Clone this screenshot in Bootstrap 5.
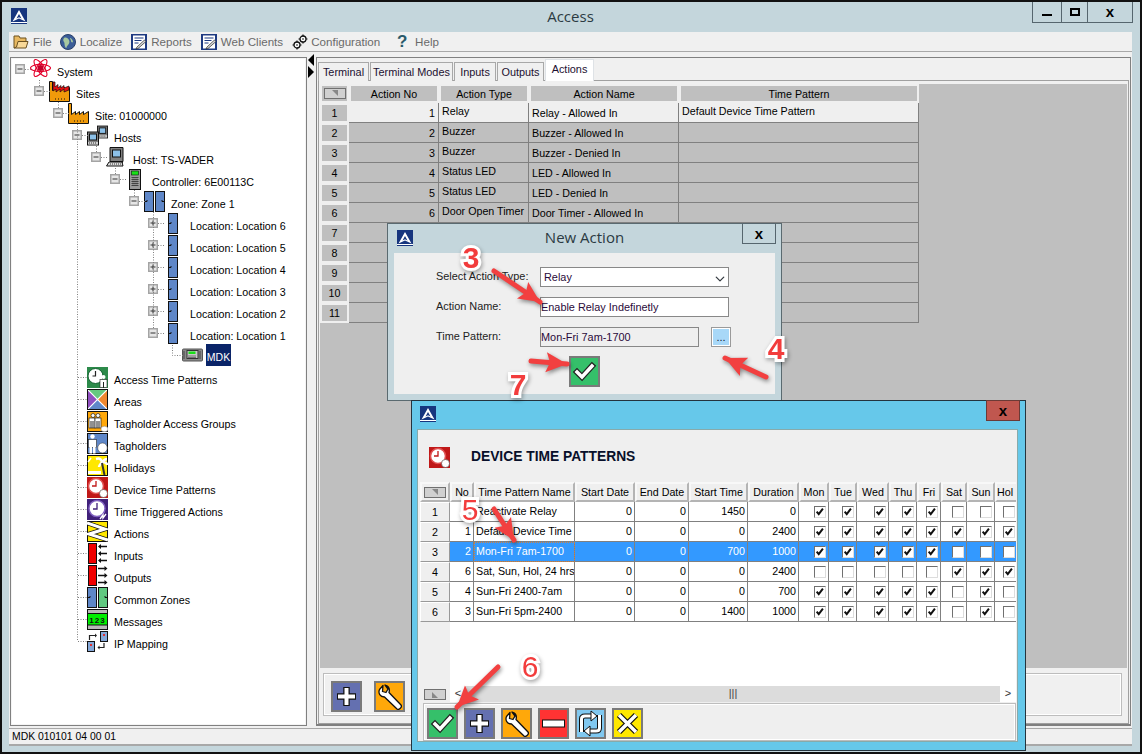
<!DOCTYPE html>
<html lang="en">
<head>
<meta charset="utf-8">
<title>Access</title>
<link rel="stylesheet" href="https://cdn.jsdelivr.net/npm/bootstrap@5.3.0/dist/css/bootstrap.min.css">
<style>
html,body{margin:0;padding:0;background:#000;overflow:hidden}
body{font-family:"Liberation Sans",sans-serif;font-size:10.7px;line-height:1.2;color:#000}
.stage{position:relative;width:1142px;height:754px;background:#111;overflow:hidden}
.win{margin:2px 2px 0;height:750px;background:#c4d6dc;padding:0 8px 0 7px}
.titlebar{height:30px;position:relative}
.title{font-family:"Open Sans",sans-serif;font-size:15px;color:#2b3a42;padding-top:5px}
.logo{width:16px;height:16px;flex:none}
.titlebar .logo{position:absolute;left:2px;top:6px}
.wbtns{position:absolute;right:-1px;top:0;height:21px;border:1px solid #56666e;border-top:0}
.wbtns span{display:flex;align-items:center;justify-content:center;height:20px;font-weight:700;font-size:15px;border-left:1px solid #56666e}
.wbtns span:first-child{border-left:0;width:28px}
.wbtns .mx{width:26px}.wbtns .cl{width:45px}
.bar{display:block;width:10px;height:2px;background:#000;margin-top:6px}
.sq{display:block;width:10px;height:8px;border:2px solid #000}
.menu{height:20px;background:#f0f0f0;border-bottom:1px solid #a8a8a8;padding-left:4px;color:#6a6a6a;font-size:11.6px}
.menu .it{display:flex;align-items:center;gap:4px;margin-right:9px}
.menu .it:first-child{margin-right:8px}
.menu .it.cfg{margin-right:15px;gap:3px}
.menu svg{width:16px;height:16px;flex:none}
.help{font-size:17px;font-weight:700;color:#2a5a6a;line-height:1;width:14px;text-align:center;margin-right:2px}
.main{height:676px;background:#f0f0f0}
.tree{width:297px;margin:5px 0 2px 1px;border:1px solid #808080;background:#fff;box-shadow:inset 0 0 0 1px #f4f4f4}
.trow{height:22px;display:flex;align-items:center;white-space:nowrap}
.trow>span{padding-top:6px}
.tb{width:10px;height:10px;flex:none;margin-right:5px}
.ti{width:21px;height:21px;flex:none;margin-right:6px}
.l0{padding-left:4px}.l1{padding-left:23px}.l2{padding-left:42px}.l3{padding-left:61px}.l4{padding-left:80px}.l5{padding-left:99px}.l6{padding-left:118px}.l7{padding-left:137px}.l8{padding-left:156px}
.trow>.sel{background:#0a2468;color:#fff;margin-left:-3px;height:22px;padding:7px 0 0;width:25px;font-size:10.5px;text-align:center}
.split{width:9px;padding-top:2px}
.tri{width:0;height:0;border-top:6px solid transparent;border-bottom:6px solid transparent;margin-left:1px}
.tri.a{border-right:6px solid #000}.tri.b{border-left:6px solid #000}
.right{width:815px;margin-top:5px;margin-bottom:2px;border:1px solid #808080;border-bottom-width:2px;padding:1px 1px 0 0}
.nav-tabs.tabs{--bs-nav-tabs-border-width:0;height:21px;flex-wrap:nowrap;border:0;margin-left:1px;position:relative;z-index:1}
.tabs .nav-link{display:block;height:19px;margin:3px 1px 0 0;padding:2px 0 0;border:1px solid #a8a8a8;border-bottom:0;border-radius:0;background:#f0f0f0;color:#1c1030;font-size:10.9px;line-height:15px;white-space:nowrap;text-align:center}
.tabs .nav-link.active{height:22px;margin-top:0;background:#fff;color:#1c1030;padding-top:2px;position:relative}
.t1{width:51px}.t2{width:83px}.t3{width:42px}.t4{width:47px}.t5{width:49px}
.tabbody{height:644px;margin-left:1px;border:1px solid #a0a0a0;background:#f0f0f0;padding:3px 1px 0 1px;width:811px}
.gridwrap{height:584px;background:#bfbfbf}
.grid.table{table-layout:fixed;border-collapse:separate;border-spacing:0;margin:0;--bs-table-bg:transparent;font-size:10.7px;color:#000}
.grid.table>:not(caption)>*>*{padding:0 3px;height:20px;border:0;border-right:1px solid #808080;border-bottom:1px solid #808080;box-shadow:none;vertical-align:middle;overflow:hidden;white-space:nowrap;color:inherit;line-height:15px}
.g1.table{width:599px}
.g1.table>tbody>tr>td{background:#bfbfbf;padding-top:1px}
.g1.table>tbody>tr.cur>td{background:#efefef}
.g1.table>tbody>tr>td.ty{vertical-align:top;padding-top:1px}
.g1.table>thead>tr>th,.g1.table>tbody>tr>th{background:#bfbfbf;border:2px solid #efefef;font-weight:400;text-align:center;padding:0;line-height:14px}
.g1.table>thead>tr>th{height:19px}
.corner{display:block;width:22px;height:11px;margin:auto;border:1px solid #707070;position:relative;background:#d0d0d0}
.corner::after{content:"";position:absolute;left:7px;top:1px;border-top:6px solid #888;border-left:6px solid transparent}
.corner.up::after{border-top:0;border-bottom:6px solid #888;border-left:0;border-right:6px solid transparent;top:2px}
.toolbar1{height:43px;margin:5px 5px 0 3px;border:1px solid #bdbdbd;box-shadow:inset 0 0 0 1px #fff;padding:7px 0 0 7px;gap:12px}
.tbtn{display:flex;width:31px;height:31px;padding:0;border:2px solid #7a7a7a;border-radius:0;flex:none}
.tbtn svg{width:27px;height:27px}
.green{background:#35c06a}.blue{background:#6470b0}.orange{background:#ffa80a}.red{background:#ff3333}.sky{background:#80c8f0}.yellow{background:#ffe800}
.status{background:#f0f0f0;border-top:1px solid #a8a8a8;border-bottom:2px solid #a8a8a8;padding:2px 0 0 3px;font-size:10.4px;box-sizing:content-box;height:13px}
.dlg{position:absolute;left:387px;top:223px;width:395px;height:178px;background:#c4d6dc;border:1px solid #5a6a70}
.dlg .hdr{height:29px;position:relative}
.dlg .hdr .logo{position:absolute;left:9px;top:6px}
.dlg .ttl{font-family:"Open Sans",sans-serif;font-size:15px;color:#2b3a42;text-align:center;padding-top:4px}
.x{position:absolute;top:-1px;right:5px;width:34px;height:21px;border:1px solid #56666e;font-weight:700;font-size:15px;display:flex;align-items:center;justify-content:center;line-height:1}
.dlg .body{margin:0 6px;height:141px;background:#efefef;padding:14px 0 0 42px}
.frow{display:flex;align-items:center;height:20px;margin-bottom:10px;color:#222}
.frow label{width:104px;flex:none;font-size:10.9px}
.frow .form-control,.frow .form-select{height:20px;min-height:0;width:189px;border-radius:0;border:1px solid #888;font-size:10.9px;padding:0;color:#2a0a3a;box-shadow:none;line-height:18px;font-family:inherit}
.frow .form-select{background-size:12px 10px;background-position:right 2px top 6px;padding-left:3px}
.frow .form-control.dis{width:159px;background:#efefef}
.more{width:20px;height:20px;margin-left:12px;padding:0;border:1px solid #9a9a9a;border-radius:0;background:#a8d8f8;font-size:11px;line-height:14px;color:#123;box-shadow:inset 0 0 0 1px #fff}
.okrow{padding-left:133px;margin-top:-1px}
.tp{position:absolute;left:411px;top:400px;width:615px;height:351px;background:#66c8ea;border:1px solid #24343e}
.tp .logo{position:absolute;left:8px;top:5px}
.tp .x{top:-1px;right:5px;width:34px;background:#c0574f;border-color:#6b3a36}
.tp .inner{position:absolute;left:6px;top:29px;width:599px;height:311px;background:#efefef;box-shadow:0 0 0 1px #8aa}
.tp .head{height:52px;gap:21px;padding-left:11px;font-weight:700;font-size:13.8px;color:#08102a;padding-top:3px}
.tp .head svg{width:21px;height:21px;flex:none}
.g2wrap{margin-left:2px;width:596px;height:220px;overflow:hidden;background:#fff;position:relative}
.g2.table{width:605px}
.g2.table>thead>tr>th{background:#efefef;border:2px solid #fff;border-color:#f8f8f8 #b4b4b4 #b4b4b4 #f8f8f8;font-weight:400;text-align:center;padding:0;height:20px}
.g2.table>tbody>tr>th{background:#efefef;font-weight:400;text-align:center;padding:0;border-top:1px solid #fff;border-left:1px solid #fff;border-right:1px solid #999;border-bottom:1px solid #999}
.g2.table>tbody>tr>td{background:#fff;padding:0 2px 0 2px}
.g2.table>tbody>tr.on>td{background:#3399ff;color:#fff}
.g2.table>tbody>tr>td.fc{outline:1px dotted #d08040;outline-offset:-1px}
.rowblank{position:absolute;left:0;top:140px;bottom:16px;width:30px;background:#efefef}
.sb{position:absolute;left:0;right:0;bottom:0;height:16px;background:#dcdcdc;display:flex}
.sb .c{width:30px;background:#efefef;display:flex;align-items:center}
.sb .ar{width:16px;background:#fff;font-size:11px;text-align:center;line-height:15px;color:#333}
.sb .gr{flex:1;text-align:center;font-size:11px;line-height:15px;color:#444}
.tb2{height:38px;margin:1px 1px 0 5px;background:#efefef;border:1px solid #bdbdbd;box-shadow:inset 0 0 0 1px #fff;padding:4px 0 0 3px;gap:6px}
.anno{position:absolute;left:0;top:0;width:1142px;height:754px;pointer-events:none}
.arrows{filter:drop-shadow(1px 2px 2px rgba(0,0,0,.45))}
.num{position:absolute;font:700 30px/1 "Liberation Sans",sans-serif;color:#f23c3c;-webkit-text-stroke:6px #fff;paint-order:stroke fill;filter:drop-shadow(1px 2px 2px rgba(0,0,0,.35));transform:translate(-50%,-50%)}
.n3{left:471px;top:258px}.n4{left:776px;top:349px}.n7{left:518px;top:385px}.n5{left:470px;top:510px;font-weight:400}.n6{left:530px;top:667px;font-weight:400}
.form-check-input.cb{width:12px;height:12px;margin:0;border-radius:0;border:1px solid #707070;border-right-color:#ddd;border-bottom-color:#ddd;background-color:#fff;box-shadow:none;vertical-align:middle;display:inline-block;float:none;opacity:1}
.form-check-input.cb:checked{--bs-form-check-bg-image:url("data:image/svg+xml,%3csvg xmlns='http://www.w3.org/2000/svg' viewBox='0 0 12 12'%3e%3cpath d='M2 5.500l2.500 3L9.500 2' fill='none' stroke='%23111' stroke-width='2.400'/%3e%3c/svg%3e");background-size:100%;background-color:#fff;border-color:#707070 #ddd #ddd #707070}
</style>
</head>
<body>
<svg width="0" height="0" class="position-absolute">
<defs>
<symbol id="logo" viewBox="0 0 16 16"><rect width="16" height="16" fill="#16357e"/><path d="M8 2L14.500 13.500L8 10.500L1.500 13.500Z" fill="#fff"/><path d="M8 6L10.500 10.500L8 9.300L5.500 10.500Z" fill="#16357e"/><rect y="14" width="16" height="1" fill="#fff"/></symbol>
<symbol id="minus" viewBox="0 0 10 10"><rect x=".75" y=".75" width="8.500" height="8.500" fill="#e6e6e6" stroke="#a4a4a4" stroke-width="1.500"/><rect x="2.500" y="4.500" width="5" height="1" fill="#333"/></symbol>
<symbol id="plus" viewBox="0 0 10 10"><rect x=".75" y=".75" width="8.500" height="8.500" fill="#e6e6e6" stroke="#a4a4a4" stroke-width="1.500"/><rect x="2.500" y="4.500" width="5" height="1" fill="#333"/><rect x="4.500" y="2.500" width="1" height="5" fill="#333"/></symbol>
<symbol id="sys" viewBox="0 0 21 21"><g fill="none" stroke="#e4002b" stroke-width="1.100"><ellipse cx="10.500" cy="9" rx="10" ry="3.600"/><ellipse cx="10.500" cy="9" rx="10" ry="3.600" transform="rotate(55 10.500 9)"/><ellipse cx="10.500" cy="9" rx="10" ry="3.600" transform="rotate(-55 10.500 9)"/></g><circle cx="10.500" cy="9" r="3" fill="#c4002b"/></symbol>
<symbol id="sites" viewBox="0 0 21 21"><path d="M.5 20.500V.5h3v9l4-3v3l4-3v3l4-3v3l5-3v14z" fill="#f09a0a" stroke="#111"/><path d="M4 1h2v5l3-2.500V7l3-2.500V7l3-2.500V7l5-2v4l-5 2V8l-4 3V8l-4 3V8L4 10z" fill="#e81010" stroke="#111" stroke-width=".7"/><path d="M6 18h1m2 0h1m2 0h1m2 0h1" stroke="#111"/></symbol>
<symbol id="site" viewBox="0 0 21 21"><path d="M.5 20.500V.5h3v11l4-3v3l4-3v3l4-3v3l5-3v12z" fill="#f09a0a" stroke="#111"/><path d="M6 18h1m2 0h1m2 0h1m2 0h1" stroke="#111"/></symbol>
<symbol id="pc" viewBox="0 0 12 14"><rect x=".5" y=".5" width="11" height="13" fill="#808080" stroke="#111"/><rect x="2.500" y="2.500" width="7" height="6" fill="#8cc0e8" stroke="#111"/><rect x="1" y="10.500" width="10" height="2.500" fill="#d0d0d0"/><path d="M2 11.500h8" stroke="#333" stroke-dasharray="1 1"/></symbol>
<symbol id="hosts" viewBox="0 0 21 21"><use href="#pc" x="10" y="0" width="11" height="14"/><use href="#pc" x="0" y="6" width="12" height="15"/></symbol>
<symbol id="host" viewBox="0 0 21 21"><path d="M4 .5h13v14H4z" fill="#808080" stroke="#111"/><rect x="6.500" y="3" width="8" height="7" fill="#8cc0e8" stroke="#111"/><path d="M3 15h14l-1 0 1 4H.5z" fill="#ddd" stroke="#111"/><path d="M4 17h11" stroke="#333" stroke-dasharray="1 1"/></symbol>
<symbol id="ctrl" viewBox="0 0 21 21"><rect x="4.500" y=".5" width="11" height="20" fill="#9a9a9a" stroke="#111"/><rect x="6.500" y="2" width="7" height="4" fill="#18e018" stroke="#111" stroke-width=".6"/><rect x="6.500" y="8" width="7" height="9" fill="#444"/><path d="M6.500 9.500h7m-7 2h7m-7 2h7m-7 2h7" stroke="#ddd" stroke-dasharray="1 1"/></symbol>
<symbol id="zone" viewBox="0 0 21 21"><rect x=".5" y=".5" width="9" height="20" fill="#5f87c8" stroke="#111"/><rect x="11.500" y=".5" width="9" height="20" fill="#5f87c8" stroke="#111"/><path d="M.5 10.500H3V9m17.500 1.500H18V9" fill="none" stroke="#111"/></symbol>
<symbol id="door" viewBox="0 0 21 21"><rect x="5.500" y=".5" width="9" height="20" fill="#5f87c8" stroke="#111" /><path d="M5.500 10.500H8V9" fill="none" stroke="#111"/></symbol>
<symbol id="mdk" viewBox="0 0 21 21"><rect x=".5" y="4" width="20" height="12" rx="1" fill="#8a8a8a" stroke="#555"/><rect x="5" y="5.500" width="11" height="8" fill="#c8c8c8" stroke="#333"/><rect x="6.500" y="6.500" width="7" height="2.500" fill="#18e018"/><path d="M6.500 11h8M6.500 12.500h8" stroke="#222" stroke-dasharray="1 1"/><path d="M2 6v8M18 6v8" stroke="#444"/></symbol>
<symbol id="atp" viewBox="0 0 21 21"><rect width="21" height="21" fill="#2c8a4a"/><circle cx="8.500" cy="9" r="7.500" fill="#fff" stroke="#136030"/><path d="M8.500 4v5h-3" fill="none" stroke="#222" stroke-width="1.200"/><circle cx="16.500" cy="10" r="2" fill="#fff"/><rect x="13" y="12.500" width="7" height="8" fill="#fff" stroke="#222" stroke-width=".6"/><path d="M16.500 15v6" stroke="#222"/></symbol>
<symbol id="areas" viewBox="0 0 21 21"><path d="M0 0H21L10.500 10.500Z" fill="#66c880"/><path d="M0 0V21L10.500 10.500Z" fill="#9050c0"/><path d="M21 0V21L10.500 10.500Z" fill="#f08830"/><path d="M0 21H21L10.500 10.500Z" fill="#5f87c8"/><path d="M0 0L21 21M21 0L0 21" stroke="#fff" stroke-width="1.200"/><rect x=".5" y=".5" width="20" height="20" fill="none" stroke="#111"/></symbol>
<symbol id="groups" viewBox="0 0 21 21"><rect x=".5" y=".5" width="20" height="20" fill="#ffa80a" stroke="#111"/><g fill="#fff" stroke="#222" stroke-width=".7"><circle cx="6" cy="4.500" r="2"/><circle cx="11" cy="4.500" r="2"/><rect x="2" y="7" width="6" height="10"/><rect x="8" y="7" width="6" height="10"/></g><path d="M4 10v7m2-7v7m4-7v7m2-7v7" stroke="#222"/><ellipse cx="17.500" cy="18" rx="3.500" ry="2.800" fill="#fff" stroke="#888" stroke-width=".5"/></symbol>
<symbol id="holders" viewBox="0 0 21 21"><rect x=".5" y=".5" width="20" height="20" fill="#5f87c8" stroke="#111"/><circle cx="5.500" cy="3.500" r="2.200" fill="#fff"/><rect x="1.500" y="6.500" width="8" height="8" fill="#fff" stroke="#222" stroke-width=".6"/><rect x="2.500" y="14" width="2.500" height="6.500" fill="#fff"/><rect x="6" y="14" width="2.500" height="6.500" fill="#fff"/><ellipse cx="15.500" cy="15" rx="4.800" ry="5" fill="#fff" stroke="#333" stroke-width=".5"/></symbol>
<symbol id="hol" viewBox="0 0 21 21"><rect x=".5" y=".5" width="20" height="20" fill="#ffe800" stroke="#111"/><path d="M9 4c3-1 5 0 6 3m0 0c2-2 4-3 5-3m-5 3c3 0 5 1 5 3m-5-3c-1 2-3 3-3 5" fill="none" stroke="#fff" stroke-width="2.500"/><path d="M15 8l2.500 12" stroke="#333" stroke-width="2"/><path d="M1 17.500h13" stroke="#fff" stroke-width="3"/><path d="M4 3L1 7" stroke="#fff" stroke-width="1.500"/></symbol>
<symbol id="dtp" viewBox="0 0 21 21"><rect width="21" height="21" fill="#c01818"/><circle cx="9" cy="9" r="7.500" fill="#fff" stroke="#e05050" stroke-width="1.500"/><path d="M9 4v5H5" fill="none" stroke="#c01818" stroke-width="1.300"/><ellipse cx="16.500" cy="16.500" rx="4" ry="4" fill="#fff" stroke="#333" stroke-width=".5"/></symbol>
<symbol id="tta" viewBox="0 0 21 21"><rect width="21" height="21" fill="#40207a"/><circle cx="10" cy="9.500" r="8" fill="#fff" stroke="#8060c0" stroke-width="1.500"/><path d="M10 4v6H6" fill="none" stroke="#40207a" stroke-width="1.300"/><path d="M13 20l3-4v3l3-4" fill="none" stroke="#fff" stroke-width="1.300"/></symbol>
<symbol id="acts" viewBox="0 0 21 21"><rect x=".5" y=".5" width="20" height="20" fill="#ffe800" stroke="#111"/><path d="M0 2L18 8L2 13L21 19" fill="none" stroke="#111" stroke-width="4.500"/><path d="M0 2L18 8L2 13L21 19" fill="none" stroke="#fff" stroke-width="3"/></symbol>
<symbol id="inp" viewBox="0 0 21 21"><rect x="1.500" y=".5" width="8" height="20" fill="#f00000" stroke="#111"/><g fill="none" stroke="#111" stroke-width="1.500"><path d="M12 3.500h8M12 10.500h8M12 17.500h8"/></g><path d="M11 3.500l3-2.500v5zM11 10.500l3-2.500v5zM11 17.500l3-2.500v5z" fill="#111"/></symbol>
<symbol id="out" viewBox="0 0 21 21"><rect x="1.500" y=".5" width="8" height="20" fill="#f00000" stroke="#111"/><g fill="none" stroke="#111" stroke-width="1.500"><path d="M11 3.500h8M11 10.500h8M11 17.500h8"/></g><path d="M20.500 3.500l-3-2.500v5zM20.500 10.500l-3-2.500v5zM20.500 17.500l-3-2.500v5z" fill="#111"/></symbol>
<symbol id="cz" viewBox="0 0 21 21"><rect x=".5" y=".5" width="9" height="20" fill="#5f87c8" stroke="#111"/><rect x="11.500" y=".5" width="9" height="20" fill="#60c880" stroke="#111"/><path d="M.5 10.500H3V9m17.500 1.500H18V9" fill="none" stroke="#111"/></symbol>
<symbol id="msg" viewBox="0 0 21 21"><rect x=".5" y=".5" width="20" height="20" fill="#b8b8b8" stroke="#111"/><rect x="1" y="5" width="19" height="11" fill="#00f000"/><path d="M0 4.500h21M0 16h21" stroke="#111"/><text x="10.500" y="13.500" text-anchor="middle" font-family="Liberation Sans,sans-serif" font-weight="700" font-size="8" letter-spacing="1" fill="#111">123</text></symbol>
<symbol id="ipm" viewBox="0 0 21 21"><rect x=".5" y="10.500" width="7" height="10" fill="#86a8d8" stroke="#111"/><rect x="13.500" y=".5" width="7" height="10" fill="#86a8d8" stroke="#111"/><rect x="3" y="13" width="2" height="2" fill="#e03030"/><rect x="16" y="3" width="2" height="2" fill="#e03030"/><path d="M2.500 9V4.500H8.500M17 12V16.500H12" fill="none" stroke="#222" stroke-width="1.200"/><path d="M10 4.500l-2-2v4zM10.500 16.500l2-2v4z" fill="#222"/></symbol>
<symbol id="folder" viewBox="0 0 16 16"><path d="M1 14V2h5l1 2h6v3" fill="#e8b860" stroke="#6a5020"/><path d="M3.500 13L5 7.500H15L13 14H1Z" fill="#f8d898" stroke="#6a5020"/></symbol>
<symbol id="globe" viewBox="0 0 16 16"><circle cx="8" cy="8" r="7.500" fill="#3a5c98" stroke="#28406a"/><path d="M4 4c2-1 4 0 5 2s0 4-1 5c-2 2-1 3-2 3-2-2-1-5-2-6S3 5 4 4zM10 4c1 0 3 2 3 4-1 1-2 0-2-1s-1-2-1-3z" fill="#a8c8a0"/></symbol>
<symbol id="report" viewBox="0 0 16 16"><rect width="16" height="16" fill="#1e3a82"/><rect x="2" y="1.500" width="12" height="13" fill="#fff"/><path d="M3.500 4h9M3.500 6.500h7M3.500 9h4" stroke="#1e3a82"/><path d="M6 13L5 15l2-.5 8-7-1.500-1.500z" fill="#d8d8d8" stroke="#222" stroke-width=".7"/></symbol>
<symbol id="gears" viewBox="0 0 16 16"><g fill="#fff" stroke="#111" stroke-width="1.300"><circle cx="11" cy="5" r="3"/><circle cx="5" cy="11" r="3"/></g><g stroke="#111" stroke-width="1.200"><path d="M11 .5v1.500M11 8v1.500M6.500 5H8M14 5h1.500M5 6.500V8M5 14v1.500M.5 11H2M8 11h1.500"/></g><circle cx="11" cy="5" r=".8"/><circle cx="5" cy="11" r=".8"/></symbol>
<symbol id="ok" viewBox="0 0 27 27"><path d="M6 14l5 5L21 8" fill="none" stroke="#222" stroke-width="6" stroke-linecap="square"/><path d="M6 14l5 5L21 8" fill="none" stroke="#fff" stroke-width="3.500" stroke-linecap="square"/></symbol>
<symbol id="add" viewBox="0 0 27 27"><path d="M13.500 4v19M4 13.500h19" stroke="#111" stroke-width="6.500"/><path d="M13.500 5v17M5 13.500h17" stroke="#fff" stroke-width="4"/></symbol>
<symbol id="wrench" viewBox="0 0 27 27"><path d="M7 2.500L3.500 6.500C2 10 4 14 8.500 14L21 26C23 27.500 26.500 24 25 22L13 9.500C14 6 12.500 3 9 2L12 6 10 9.500 6.500 8.500Z" fill="#fff" stroke="#111" stroke-width="1.300" stroke-linejoin="round"/></symbol>
<symbol id="rem" viewBox="0 0 27 27"><rect x="2.500" y="10" width="22" height="7" fill="#fff" stroke="#111"/></symbol>
<symbol id="sync" viewBox="0 0 27 27"><g fill="none" stroke="#111" stroke-width="5" stroke-linejoin="round"><path d="M4.500 22V9Q4.500 6 8 6H14"/><path d="M22.500 5V18Q22.500 21 19 21H13"/></g><g fill="none" stroke="#fff" stroke-width="3" stroke-linejoin="round"><path d="M4.500 22V9Q4.500 6 8 6H14"/><path d="M22.500 5V18Q22.500 21 19 21H13"/></g><path d="M14 1l6 5-6 5zM13 16l-6 5 6 5z" fill="#fff" stroke="#111"/></symbol>
<symbol id="del" viewBox="0 0 27 27"><path d="M5 5l17 17M22 5L5 22" stroke="#111" stroke-width="6"/><path d="M5 5l17 17M22 5L5 22" stroke="#fff" stroke-width="3.500"/></symbol>
</defs>
</svg>

<div class="stage">
  <div class="win">
    <div class="titlebar">
      <svg class="logo"><use href="#logo"/></svg>
      <div class="title text-center">Access</div>
      <div class="wbtns d-flex"><span><i class="bar"></i></span><span class="mx"><i class="sq"></i></span><span class="cl">x</span></div>
    </div>
    <nav class="menu d-flex align-items-center">
      <div class="it"><svg><use href="#folder"/></svg>File</div>
      <div class="it"><svg><use href="#globe"/></svg>Localize</div>
      <div class="it"><svg><use href="#report"/></svg>Reports</div>
      <div class="it"><svg><use href="#report"/></svg>Web Clients</div>
      <div class="it cfg"><svg><use href="#gears"/></svg>Configuration</div>
      <div class="it"><span class="help">?</span>Help</div>
    </nav>
    <div class="main d-flex">
      <div class="tree">
        <div class="trow l0"><svg class="tb"><use href="#minus"/></svg><svg class="ti"><use href="#sys"/></svg><span>System</span></div>
        <div class="trow l1"><svg class="tb"><use href="#minus"/></svg><svg class="ti"><use href="#sites"/></svg><span>Sites</span></div>
        <div class="trow l2"><svg class="tb"><use href="#minus"/></svg><svg class="ti"><use href="#site"/></svg><span>Site: 01000000</span></div>
        <div class="trow l3"><svg class="tb"><use href="#minus"/></svg><svg class="ti"><use href="#hosts"/></svg><span>Hosts</span></div>
        <div class="trow l4"><svg class="tb"><use href="#minus"/></svg><svg class="ti"><use href="#host"/></svg><span>Host: TS-VADER</span></div>
        <div class="trow l5"><svg class="tb"><use href="#minus"/></svg><svg class="ti"><use href="#ctrl"/></svg><span>Controller: 6E00113C</span></div>
        <div class="trow l6"><svg class="tb"><use href="#minus"/></svg><svg class="ti"><use href="#zone"/></svg><span>Zone: Zone 1</span></div>
        <div class="trow l7"><svg class="tb"><use href="#plus"/></svg><svg class="ti"><use href="#door"/></svg><span>Location: Location 6</span></div>
        <div class="trow l7"><svg class="tb"><use href="#plus"/></svg><svg class="ti"><use href="#door"/></svg><span>Location: Location 5</span></div>
        <div class="trow l7"><svg class="tb"><use href="#plus"/></svg><svg class="ti"><use href="#door"/></svg><span>Location: Location 4</span></div>
        <div class="trow l7"><svg class="tb"><use href="#plus"/></svg><svg class="ti"><use href="#door"/></svg><span>Location: Location 3</span></div>
        <div class="trow l7"><svg class="tb"><use href="#plus"/></svg><svg class="ti"><use href="#door"/></svg><span>Location: Location 2</span></div>
        <div class="trow l7"><svg class="tb"><use href="#minus"/></svg><svg class="ti"><use href="#door"/></svg><span>Location: Location 1</span></div>
        <div class="trow l8"><svg class="tb invisible"></svg><svg class="ti"><use href="#mdk"/></svg><span class="sel">MDK</span></div>
        <div class="trow l3"><svg class="tb invisible"></svg><svg class="ti"><use href="#atp"/></svg><span>Access Time Patterns</span></div>
        <div class="trow l3"><svg class="tb invisible"></svg><svg class="ti"><use href="#areas"/></svg><span>Areas</span></div>
        <div class="trow l3"><svg class="tb invisible"></svg><svg class="ti"><use href="#groups"/></svg><span>Tagholder Access Groups</span></div>
        <div class="trow l3"><svg class="tb invisible"></svg><svg class="ti"><use href="#holders"/></svg><span>Tagholders</span></div>
        <div class="trow l3"><svg class="tb invisible"></svg><svg class="ti"><use href="#hol"/></svg><span>Holidays</span></div>
        <div class="trow l3"><svg class="tb invisible"></svg><svg class="ti"><use href="#dtp"/></svg><span>Device Time Patterns</span></div>
        <div class="trow l3"><svg class="tb invisible"></svg><svg class="ti"><use href="#tta"/></svg><span>Time Triggered Actions</span></div>
        <div class="trow l3"><svg class="tb invisible"></svg><svg class="ti"><use href="#acts"/></svg><span>Actions</span></div>
        <div class="trow l3"><svg class="tb invisible"></svg><svg class="ti"><use href="#inp"/></svg><span>Inputs</span></div>
        <div class="trow l3"><svg class="tb invisible"></svg><svg class="ti"><use href="#out"/></svg><span>Outputs</span></div>
        <div class="trow l3"><svg class="tb invisible"></svg><svg class="ti"><use href="#cz"/></svg><span>Common Zones</span></div>
        <div class="trow l3"><svg class="tb invisible"></svg><svg class="ti"><use href="#msg"/></svg><span>Messages</span></div>
        <div class="trow l3"><svg class="tb invisible"></svg><svg class="ti"><use href="#ipm"/></svg><span>IP Mapping</span></div>
      </div>
      <div class="split"><div class="tri a"></div><div class="tri b"></div></div>
      <div class="right">
        <ul class="nav nav-tabs tabs">
          <li class="nav-item"><a class="nav-link t1" href="#">Terminal</a></li>
          <li class="nav-item"><a class="nav-link t2" href="#">Terminal Modes</a></li>
          <li class="nav-item"><a class="nav-link t3" href="#">Inputs</a></li>
          <li class="nav-item"><a class="nav-link t4" href="#">Outputs</a></li>
          <li class="nav-item"><a class="nav-link t5 active" href="#">Actions</a></li>
        </ul>
        <div class="tabbody">
          <div class="gridwrap">
            <table class="table grid g1">
              <colgroup><col style="width:29px"><col style="width:90px"><col style="width:90px"><col style="width:150px"><col style="width:240px"></colgroup>
              <thead><tr><th><span class="corner"></span></th><th>Action No</th><th>Action Type</th><th>Action Name</th><th>Time Pattern</th></tr></thead>
              <tbody>
                <tr class="cur"><th>1</th><td class="text-end">1</td><td class="ty">Relay</td><td>Relay - Allowed In</td><td class="ty">Default Device Time Pattern</td></tr>
                <tr><th>2</th><td class="text-end">2</td><td class="ty">Buzzer</td><td>Buzzer - Allowed In</td><td></td></tr>
                <tr><th>3</th><td class="text-end">3</td><td class="ty">Buzzer</td><td>Buzzer - Denied In</td><td></td></tr>
                <tr><th>4</th><td class="text-end">4</td><td class="ty">Status LED</td><td>LED - Allowed In</td><td></td></tr>
                <tr><th>5</th><td class="text-end">5</td><td class="ty">Status LED</td><td>LED - Denied In</td><td></td></tr>
                <tr><th>6</th><td class="text-end">6</td><td class="ty">Door Open Timer</td><td>Door Timer - Allowed In</td><td></td></tr>
                <tr><th>7</th><td></td><td></td><td></td><td></td></tr>
                <tr><th>8</th><td></td><td></td><td></td><td></td></tr>
                <tr><th>9</th><td></td><td></td><td></td><td></td></tr>
                <tr><th>10</th><td></td><td></td><td></td><td></td></tr>
                <tr><th>11</th><td></td><td></td><td></td><td></td></tr>
              </tbody>
            </table>
          </div>
          <div class="toolbar1 d-flex">
            <button class="btn tbtn blue"><svg><use href="#add"/></svg></button>
            <button class="btn tbtn orange"><svg><use href="#wrench"/></svg></button>
          </div>
        </div>
      </div>
    </div>
    <div class="status">MDK 010101 04 00 01</div>
  </div>

  <svg class="anno" viewBox="0 0 1142 754">
    <g fill="none" stroke="#808080" stroke-dasharray="1 1.500">
      <path d="M25 69.500H31M39.500 80V87M44 91.500H50M58.500 102V109M63 113.500H69M77.500 124V641.500M82 135.500H88M96.500 146V153M101 157.500H107M115.500 168V175M120 179.500H126M134.500 190V197M139 201.500H145M153.500 212V329M158 223.500H165M158 245.500H165M158 267.500H165M158 289.500H165M158 311.500H165M158 333.500H165M172.500 345V355.500H183"/>
      <path d="M78 377.500H88M78 399.500H88M78 421.500H88M78 443.500H88M78 465.500H88M78 487.500H88M78 509.500H88M78 531.500H88M78 553.500H88M78 575.500H88M78 597.500H88M78 619.500H88M78 641.500H88"/>
    </g>
  </svg>

  <div class="dlg">
    <div class="hdr">
      <svg class="logo"><use href="#logo"/></svg>
      <div class="ttl">New Action</div>
      <div class="x">x</div>
    </div>
    <div class="body">
      <div class="frow"><label>Select Action Type:</label><select class="form-select"><option>Relay</option></select></div>
      <div class="frow"><label>Action Name:</label><input class="form-control" value="Enable Relay Indefinetly"></div>
      <div class="frow"><label>Time Pattern:</label><input class="form-control dis" value="Mon-Fri 7am-1700"><button class="btn more">...</button></div>
      <div class="okrow"><button class="btn tbtn green"><svg><use href="#ok"/></svg></button></div>
    </div>
  </div>

  <div class="tp">
    <svg class="logo"><use href="#logo"/></svg>
    <div class="x">x</div>
    <div class="inner">
      <div class="head d-flex align-items-center"><svg><use href="#dtp"/></svg><span>DEVICE TIME PATTERNS</span></div>
      <div class="g2wrap">
        <table class="table grid g2">
          <colgroup><col style="width:30px"><col style="width:24px"><col style="width:101px"><col style="width:60px"><col style="width:54px"><col style="width:59px"><col style="width:51px"><col style="width:30px"><col style="width:28px"><col style="width:32px"><col style="width:28px"><col style="width:24px"><col style="width:26px"><col style="width:28px"><col style="width:30px"></colgroup>
          <thead><tr><th><span class="corner"></span></th><th>No</th><th>Time Pattern Name</th><th>Start Date</th><th>End Date</th><th>Start Time</th><th>Duration</th><th>Mon</th><th>Tue</th><th>Wed</th><th>Thu</th><th>Fri</th><th>Sat</th><th>Sun</th><th class="text-start">Hol</th></tr></thead>
          <tbody>
            <tr><th>1</th><td class="text-end"></td><td>Reactivate Relay</td><td class="text-end">0</td><td class="text-end">0</td><td class="text-end">1450</td><td class="text-end">0</td><td class="text-end"><input class="form-check-input cb" type="checkbox" checked></td><td class="text-end"><input class="form-check-input cb" type="checkbox" checked></td><td class="text-end"><input class="form-check-input cb" type="checkbox" checked></td><td class="text-end"><input class="form-check-input cb" type="checkbox" checked></td><td class="text-end"><input class="form-check-input cb" type="checkbox" checked></td><td class="text-end"><input class="form-check-input cb" type="checkbox"></td><td class="text-end"><input class="form-check-input cb" type="checkbox"></td><td class="ps-2"><input class="form-check-input cb" type="checkbox"></td></tr>
            <tr><th>2</th><td class="text-end">1</td><td>Default Device Time</td><td class="text-end">0</td><td class="text-end">0</td><td class="text-end">0</td><td class="text-end">2400</td><td class="text-end"><input class="form-check-input cb" type="checkbox" checked></td><td class="text-end"><input class="form-check-input cb" type="checkbox" checked></td><td class="text-end"><input class="form-check-input cb" type="checkbox" checked></td><td class="text-end"><input class="form-check-input cb" type="checkbox" checked></td><td class="text-end"><input class="form-check-input cb" type="checkbox" checked></td><td class="text-end"><input class="form-check-input cb" type="checkbox" checked></td><td class="text-end"><input class="form-check-input cb" type="checkbox" checked></td><td class="ps-2"><input class="form-check-input cb" type="checkbox" checked></td></tr>
            <tr class="on"><th>3</th><td class="text-end">2</td><td class="fc">Mon-Fri 7am-1700</td><td class="text-end">0</td><td class="text-end">0</td><td class="text-end">700</td><td class="text-end">1000</td><td class="text-end"><input class="form-check-input cb" type="checkbox" checked></td><td class="text-end"><input class="form-check-input cb" type="checkbox" checked></td><td class="text-end"><input class="form-check-input cb" type="checkbox" checked></td><td class="text-end"><input class="form-check-input cb" type="checkbox" checked></td><td class="text-end"><input class="form-check-input cb" type="checkbox" checked></td><td class="text-end"><input class="form-check-input cb" type="checkbox"></td><td class="text-end"><input class="form-check-input cb" type="checkbox"></td><td class="ps-2"><input class="form-check-input cb" type="checkbox"></td></tr>
            <tr><th>4</th><td class="text-end">6</td><td>Sat, Sun, Hol, 24 hrs</td><td class="text-end">0</td><td class="text-end">0</td><td class="text-end">0</td><td class="text-end">2400</td><td class="text-end"><input class="form-check-input cb" type="checkbox"></td><td class="text-end"><input class="form-check-input cb" type="checkbox"></td><td class="text-end"><input class="form-check-input cb" type="checkbox"></td><td class="text-end"><input class="form-check-input cb" type="checkbox"></td><td class="text-end"><input class="form-check-input cb" type="checkbox"></td><td class="text-end"><input class="form-check-input cb" type="checkbox" checked></td><td class="text-end"><input class="form-check-input cb" type="checkbox" checked></td><td class="ps-2"><input class="form-check-input cb" type="checkbox" checked></td></tr>
            <tr><th>5</th><td class="text-end">4</td><td>Sun-Fri 2400-7am</td><td class="text-end">0</td><td class="text-end">0</td><td class="text-end">0</td><td class="text-end">700</td><td class="text-end"><input class="form-check-input cb" type="checkbox" checked></td><td class="text-end"><input class="form-check-input cb" type="checkbox" checked></td><td class="text-end"><input class="form-check-input cb" type="checkbox" checked></td><td class="text-end"><input class="form-check-input cb" type="checkbox" checked></td><td class="text-end"><input class="form-check-input cb" type="checkbox" checked></td><td class="text-end"><input class="form-check-input cb" type="checkbox"></td><td class="text-end"><input class="form-check-input cb" type="checkbox" checked></td><td class="ps-2"><input class="form-check-input cb" type="checkbox"></td></tr>
            <tr><th>6</th><td class="text-end">3</td><td>Sun-Fri 5pm-2400</td><td class="text-end">0</td><td class="text-end">0</td><td class="text-end">1400</td><td class="text-end">1000</td><td class="text-end"><input class="form-check-input cb" type="checkbox" checked></td><td class="text-end"><input class="form-check-input cb" type="checkbox" checked></td><td class="text-end"><input class="form-check-input cb" type="checkbox" checked></td><td class="text-end"><input class="form-check-input cb" type="checkbox" checked></td><td class="text-end"><input class="form-check-input cb" type="checkbox" checked></td><td class="text-end"><input class="form-check-input cb" type="checkbox"></td><td class="text-end"><input class="form-check-input cb" type="checkbox" checked></td><td class="ps-2"><input class="form-check-input cb" type="checkbox"></td></tr>
          </tbody>
        </table>
        <div class="rowblank"></div>
        <div class="sb"><div class="c"><span class="corner up"></span></div><div class="ar">&lt;</div><div class="gr">|||</div><div class="ar">&gt;</div></div>
      </div>
      <div class="tb2 d-flex">
        <button class="btn tbtn green"><svg><use href="#ok"/></svg></button>
        <button class="btn tbtn blue"><svg><use href="#add"/></svg></button>
        <button class="btn tbtn orange"><svg><use href="#wrench"/></svg></button>
        <button class="btn tbtn red"><svg><use href="#rem"/></svg></button>
        <button class="btn tbtn sky"><svg><use href="#sync"/></svg></button>
        <button class="btn tbtn yellow"><svg><use href="#del"/></svg></button>
      </div>
    </div>
  </div>

  <svg class="anno arrows" viewBox="0 0 1142 754">
    <defs><marker id="ah" markerUnits="userSpaceOnUse" markerWidth="24" markerHeight="24" refX="21" refY="11" orient="auto"><path d="M0 1L21 11L0 21L4 11Z" fill="#f24040"/></marker></defs>
    <g stroke="#f24040" stroke-width="5" stroke-linecap="round" fill="none">
      <path d="M494 271L540 302" marker-end="url(#ah)"/>
      <path d="M766 377L725 358" marker-end="url(#ah)"/>
      <path d="M531 361L567 364" marker-end="url(#ah)"/>
      <path d="M494 509L514 540" marker-end="url(#ah)"/>
      <path d="M498 667L457 707" marker-end="url(#ah)"/>
    </g>
  </svg>
  <span class="num n3">3</span><span class="num n4">4</span><span class="num n7">7</span><span class="num n5">5</span><span class="num n6">6</span>
</div>
<script src="https://cdn.jsdelivr.net/npm/bootstrap@5.3.0/dist/js/bootstrap.bundle.min.js"></script>
</body>
</html>
